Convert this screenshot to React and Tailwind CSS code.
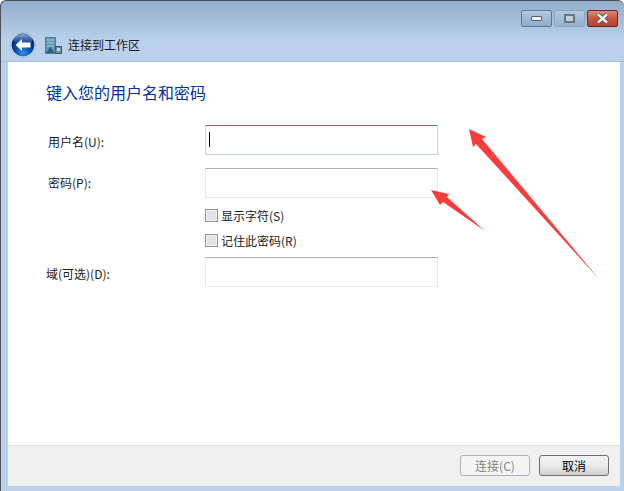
import React from "react";

const font = { fontFamily: '"Noto Sans CJK SC", "Noto Sans", sans-serif' };

const BackIcon = () => (
  <svg width="26" height="26" viewBox="0 0 26 26">
    <defs>
      <radialGradient id="backFill" cx="50%" cy="85%" r="75%">
        <stop offset="0%" stopColor="#2f8fe8" />
        <stop offset="50%" stopColor="#0647ad" />
        <stop offset="100%" stopColor="#041d63" />
      </radialGradient>
      <linearGradient id="backShine" x1="0" y1="0" x2="0" y2="1">
        <stop offset="0%" stopColor="#b9d4f2" stopOpacity="0.8" />
        <stop offset="100%" stopColor="#3f78c8" stopOpacity="0.1" />
      </linearGradient>
    </defs>
    <circle cx="13" cy="13" r="12.6" fill="#e6eef7" stroke="#7e98b6" strokeWidth="0.5" />
    <circle cx="13" cy="13" r="11.4" fill="url(#backFill)" />
    <ellipse cx="13" cy="7.5" rx="9.5" ry="5.5" fill="url(#backShine)" />
    <path d="M5.5 13 L12 7 L12 10.5 L20.5 10.5 L20.5 15.5 L12 15.5 L12 19 Z" fill="#ffffff" />
  </svg>
);

const BuildingIcon = () => (
  <svg width="17" height="17" viewBox="0 0 17 17">
    <rect x="0.5" y="0.5" width="10" height="16" fill="#5e96b4" stroke="#4f7f97" />
    <path d="M2 3h7M2 6h7M2 9h7" stroke="#a9d2e4" strokeWidth="1" />
    <path d="M1 16 L5 10 L10 16 Z" fill="#2f5f7c" />
    <rect x="10.5" y="9.5" width="6" height="7" fill="#6f8a99" stroke="#42596a" />
    <rect x="12" y="11" width="3" height="3" fill="#bcd5e2" />
  </svg>
);

const WinButton = ({ className, children }) => (
  <div className={`flex h-[17px] w-[31px] items-center justify-center rounded-[2px] border ${className}`}>
    {children}
  </div>
);

const Field = ({ focused, children }) => (
  <div
    className={`flex h-[30px] w-[233px] items-center rounded-[1px] border bg-white pl-[3px] ${
      focused
        ? "border-[#b7d3e8] border-t-[#3c7fb1]"
        : "border-[#e3e9ef] border-t-[#abadb3]"
    }`}
  >
    {children}
  </div>
);

const Check = ({ label, className }) => (
  <div className={`ml-[197px] flex h-[13px] items-center gap-[3px] ${className}`}>
    <div className="h-[13px] w-[13px] border border-[#8e8f8f] bg-[#e2e2e2] shadow-[inset_0_0_0_1px_#f4f4f4]" />
    <span className="text-[12px] text-[#1a1a1a]">{label}</span>
  </div>
);

const App = () => {
  return (
    <div
      style={font}
      className="relative flex h-[491px] w-[624px] flex-col overflow-hidden rounded-t-[6px] border-t border-l border-[#4a5158] bg-[#b9d1ea] bg-gradient-to-b from-[#93aec9] from-0% to-[#b9d1ea] to-[8%]"
    >
      <div className="flex h-[61px] flex-none flex-col border-b border-[#a6c0dc]">
        <div className="flex justify-end gap-[2px] pt-[9px] pr-[6px]">
          <WinButton className="border-[#5f7894] bg-gradient-to-b from-[#b7cde2] via-[#9db8d3] to-[#8fadcb]">
            <div className="h-[5px] w-[11px] rounded-[1px] border border-[#54616f] bg-[#eef0f2]" />
          </WinButton>
          <WinButton className="border-[#8aa4bf] bg-gradient-to-b from-[#b3c9df] via-[#a3bcd6] to-[#95b1cd]">
            <div className="flex h-[9px] w-[11px] items-center justify-center border-2 border-[#6a7684] bg-[#c3cfdc]" />
          </WinButton>
          <WinButton className="border-[#6a2230] bg-gradient-to-b from-[#d98a7c] via-[#c9553f] to-[#b5412f]">
            <svg width="13" height="11" viewBox="0 0 13 11">
              <path d="M2 1.5 L11 9.5 M11 1.5 L2 9.5" stroke="#4a4f55" strokeWidth="4" />
              <path d="M2 1.5 L11 9.5 M11 1.5 L2 9.5" stroke="#f1f1f1" strokeWidth="2.4" />
            </svg>
          </WinButton>
        </div>
        <div className="mt-[5px] flex items-center pl-[9px]">
          <BackIcon />
          <div className="ml-[9px]">
            <BuildingIcon />
          </div>
          <span className="ml-[6px] text-[12px] text-[#1a1a1a]">连接到工作区</span>
        </div>
      </div>

      <div className="flex min-h-0 flex-1 flex-col pr-[4px] pb-[5px] pl-[7px]">
        <div className="flex min-h-0 flex-1 flex-col bg-white">
          <h1 className="mt-[18px] ml-[38px] text-[16px] leading-[24px] text-[#003399]">
            键入您的用户名和密码
          </h1>
          <div className="mt-[21px] flex flex-col">
            <div className="flex items-center">
              <span className="ml-[40px] w-[157px] pt-[4px] text-[12px] text-[#1a1a1a]">用户名(U):</span>
              <Field focused>
                <div className="mb-[2px] h-[15px] w-px bg-black" />
              </Field>
            </div>
            <div className="mt-[13px] flex items-center">
              <span className="ml-[40px] w-[157px] text-[12px] text-[#1a1a1a]">密码(P):</span>
              <Field />
            </div>
            <Check label="显示字符(S)" className="mt-[11px]" />
            <Check label="记住此密码(R)" className="mt-[12px]" />
            <div className="mt-[10px] flex items-center">
              <span className="ml-[38px] w-[159px] pt-[4px] text-[12px] text-[#1a1a1a]">域(可选)(D):</span>
              <Field />
            </div>
          </div>
        </div>
        <div className="flex h-[41px] flex-none items-center justify-end gap-[9px] border-t border-[#dfdfdf] bg-[#f0f0f0] pr-[11px] pb-[1px]">
          <button className="h-[21px] w-[70px] rounded-[3px] border border-[#adb2b5] bg-[#f4f4f4] text-[12px] leading-none text-[#838383]">
            连接(C)
          </button>
          <button className="h-[21px] w-[70px] rounded-[3px] border border-[#707070] bg-gradient-to-b from-[#f2f2f2] via-[#ebebeb] to-[#cfcfcf] text-[12px] leading-none text-black">
            取消
          </button>
        </div>
      </div>

      {/* red arrows drawn over the dialog */}
      <svg className="absolute top-[-1px] left-[-1px]" width="624" height="491" viewBox="0 0 624 491">
        <polygon points="469,129 486,137 482,139 599,279 476,144 473,147" fill="#fb3c3c" />
        <polygon points="431,190 449,194 447,197 485,231 443,202 440,205" fill="#fb3c3c" />
      </svg>
    </div>
  );
};

export default App;
